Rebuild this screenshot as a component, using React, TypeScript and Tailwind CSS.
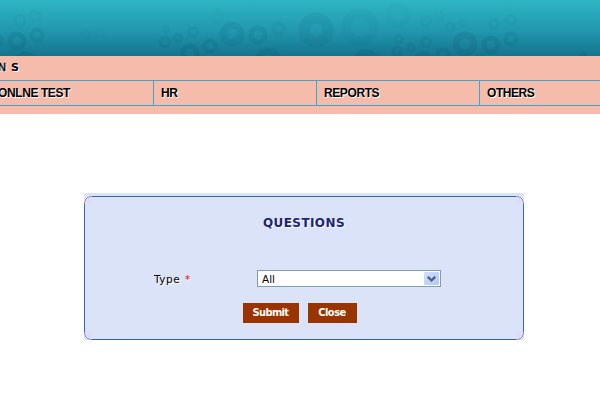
const rings: [number, number, number, number, number][] = [
  // cx, cy, radius, stroke width, opacity
  [17, 41, 7, 5, 0.2], [37, 35, 5.5, 4, 0.15], [20, 21, 5, 3, 0.07], [35, 16, 5, 3, 0.06],
  [-3, 41, 5, 4, 0.14], [25, 61, 7, 6, 0.2], [165, 42, 4.5, 3, 0.18], [178, 38, 3.5, 3, 0.14],
  [193, 32, 4.5, 3, 0.11], [166, 29, 3, 2, 0.08], [190, 53, 7, 5, 0.22], [210, 46, 5.5, 4, 0.2],
  [232, 34, 9, 7, 0.14], [258, 35, 7, 5, 0.15], [278, 29, 5.5, 4, 0.1], [217, 17, 5, 3, 0.04],
  [268, 61, 10, 7, 0.2], [316, 30, 12, 11, 0.12], [360, 27, 14, 9, 0.05], [366, 64, 11, 8, 0.2],
  [399, 39, 3.5, 3, 0.12], [397, 51, 4, 3, 0.18], [411, 48, 3.5, 3, 0.17], [426, 42, 4.5, 3, 0.16],
  [426, 21, 4.5, 3, 0.06], [439, 16, 4, 2, 0.05], [450, 27, 4, 3, 0.08], [463, 23, 3, 2, 0.06],
  [465, 44, 9, 7, 0.2], [491, 45, 7, 5, 0.2], [511, 39, 5.5, 4, 0.16], [494, 24, 4, 3, 0.08],
  [511, 20, 4.5, 3, 0.05], [443, 55, 5.5, 4, 0.2], [423, 60, 6, 6, 0.18], [583, 57, 3, 3, 0.17],
  [398, 15, 10, 5, 0.03], [86, 35, 4, 3, 0.03], [100, 34, 4, 3, 0.03],
];

function Banner() {
  return (
    <header className="h-14 overflow-hidden bg-linear-to-b from-[#2fb5c4] via-[#2297ae] via-55% to-[#14748e]">
      <svg width="600" height="56" viewBox="0 0 600 56" className="block blur-[0.6px]">
        {rings.map(([cx, cy, r, w, o], i) => (
          <circle key={i} cx={cx} cy={cy} r={r} fill="none" stroke="#075064" strokeWidth={w} opacity={o * 0.75} />
        ))}
      </svg>
    </header>
  );
}

const lightShadow = "[text-shadow:1px_1px_0_#fff]";

function MenuItem({ label, className }: { label: string; className: string }) {
  return (
    <a className={`h-6 shrink-0 text-[12px] leading-6 font-bold whitespace-nowrap ${lightShadow} ${className}`}>
      {label}
    </a>
  );
}

function Corner({ className }: { className: string }) {
  return (
    <svg width="8" height="8" viewBox="0 0 8 8" className={`absolute ${className}`} shapeRendering="crispEdges">
      <rect width="8" height="8" fill="#dbe3f8" />
      <path d="M8 0H5V1H3V2H2V3H1V5H0V8H8Z" fill="#dddcf6" />
      <path d="M5 .5H8M3 1.5H5M2 2.5H3M1.5 3V5M.5 5V8" stroke="#9c91ce" fill="none" />
    </svg>
  );
}

export default function App() {
  return (
    <div className="h-[400px] w-[600px] overflow-hidden bg-white font-['Liberation_Sans',sans-serif] text-black">
      <Banner />
      <div className="h-[58px] bg-[#f5bbab]">
        <div className={`flex h-6 text-[11px] leading-[23px] whitespace-nowrap ${lightShadow}`}>
          <span className="-ml-[2px] w-[13px] font-['DejaVu_Sans',sans-serif] [-webkit-text-stroke:0.3px_#000]">N</span>
          <span className="font-['DejaVu_Sans',sans-serif] font-bold">S</span>
        </div>
        <nav className="flex h-[26px] overflow-hidden border-y border-[#43a3c8]">
          <MenuItem label="ONLNE TEST" className="-ml-[2px] w-[155px] tracking-[-0.4px]" />
          <MenuItem label="HR" className="w-[163px] border-l border-[#43a3c8] pl-[7px] tracking-[-0.4px]" />
          <MenuItem label="REPORTS" className="w-[163px] border-l border-[#43a3c8] pl-[7px] tracking-[-0.4px]" />
          <MenuItem label="OTHERS" className="w-[163px] border-l border-[#43a3c8] pl-[7px] tracking-[-0.45px]" />
        </nav>
      </div>

      <main className="mt-[79px] ml-[84px] w-[440px] bg-[#dbe3f8] pt-[3px] font-['DejaVu_Sans',sans-serif]">
        <form className="relative h-36 border border-[#34669b]">
          <Corner className="-top-px -left-px" />
          <Corner className="-top-px -right-px -scale-x-100" />
          <Corner className="-bottom-px -left-px -scale-y-100" />
          <Corner className="-right-px -bottom-px -scale-100" />
          <h1 className="pt-4 pl-[178px] text-[12px] leading-5 font-bold tracking-[0.4px] text-[#1d2476] [text-shadow:1px_1px_0_#fff]">
            QUESTIONS
          </h1>
          <div className="mt-[37px] flex h-[17px] pl-[69px]">
            <label className="w-[103px] text-[10.5px] leading-[19px] tracking-[0.5px] [text-shadow:1px_1px_0_#fff]">
              Type <span className="pl-px text-[#f00000]">*</span>
            </label>
            <div className="flex h-[17px] w-[184px] justify-between border border-[#7f9db9] bg-white p-px">
              <span className="pl-[3px] text-[10.5px] leading-[14px]">All</span>
              <span className="flex h-[13px] w-[15px] items-center justify-center rounded-[1px] bg-linear-to-br from-[#d0defe] to-[#b3c9f8]">
                <svg width="9" height="6" viewBox="0 0 9 6">
                  <path d="M.8 .8L4.5 4.3L8.2 .8" fill="none" stroke="#4d6185" strokeWidth="2.3" />
                </svg>
              </span>
            </div>
          </div>
          <div className="mt-4 flex gap-[9px] pl-[158px] font-['DejaVu_Sans_Condensed','DejaVu_Sans',sans-serif]">
            <button type="button" className="h-5 w-14 bg-[#993300] pr-px text-[11px] leading-5 font-bold tracking-[-0.65px] text-white">
              Submit
            </button>
            <button type="button" className="h-5 w-[49px] bg-[#993300] pr-px text-[11px] leading-5 font-bold tracking-[-0.5px] text-white">
              Close
            </button>
          </div>
        </form>
      </main>
    </div>
  );
}
